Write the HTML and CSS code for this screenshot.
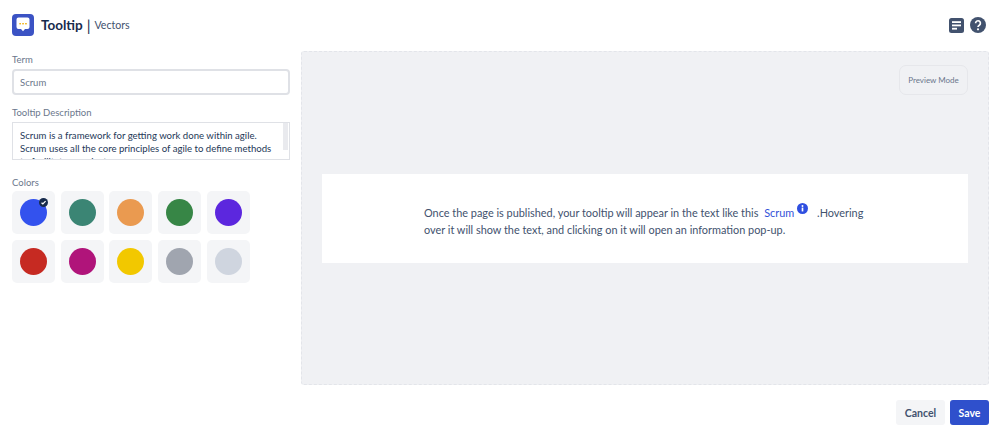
FILE: index.html
```html
<!DOCTYPE html>
<html lang="en">
<head>
    <meta charset="UTF-8">
    <meta name="viewport" content="width=device-width, initial-scale=1.0">
    <title>Tooltip | Vectors</title>
    <link rel="stylesheet" href="styles.css">
</head>
<body>
    <header class="top-bar">
        <div class="brand">
            <svg class="brand-icon" width="22" height="22" viewBox="0 0 22 22">
                <rect width="22" height="22" rx="4" fill="#3b53c4"/>
                <path d="M6.500 3.500h9a2 2 0 0 1 2 2v7.500a2 2 0 0 1-2 2h-2.500l-2 2.300-2-2.300h-2.500a2 2 0 0 1-2-2v-7.500a2 2 0 0 1 2-2z" fill="#fff"/>
                <rect x="7.300" y="9" width="1.700" height="1.400" fill="#f2b51d"/>
                <rect x="10.200" y="9" width="1.700" height="1.400" fill="#f2b51d"/>
                <rect x="13.100" y="9" width="1.700" height="1.400" fill="#f2b51d"/>
            </svg>
            <span class="brand-name">Tooltip</span>
            <span class="brand-sep">|</span>
            <span class="brand-sub">Vectors</span>
        </div>
        <div class="top-actions">
            <svg width="15" height="15" viewBox="0 0 15 15">
                <rect width="15" height="15" rx="2.500" fill="#42526e"/>
                <rect x="3" y="3.200" width="9" height="1.800" fill="#fff"/>
                <rect x="3" y="6.500" width="9" height="1.800" fill="#fff"/>
                <rect x="3" y="9.800" width="5" height="1.800" fill="#fff"/>
            </svg>
            <svg width="16" height="16" viewBox="0 0 16 16">
                <circle cx="8" cy="8" r="8" fill="#42526e"/>
                <path d="M5.600 6.200a2.400 2.400 0 1 1 3.700 2c-.9.6-1.300 1-1.300 1.800" fill="none" stroke="#fff" stroke-width="1.700"/>
                <circle cx="8" cy="12.300" r="1.100" fill="#fff"/>
            </svg>
        </div>
    </header>

    <main class="layout">
        <section class="form-col">
            <label class="field-label">Term</label>
            <div class="term-input">Scrum</div>

            <label class="field-label desc-label" for="desc">Tooltip Description</label>
            <textarea id="desc" class="desc-box" readonly>Scrum is a framework for getting work done within agile. Scrum uses all the core principles of agile to define methods to facilitate a project.</textarea>

            <label class="field-label colors-label">Colors</label>
            <div class="swatches">
                <div class="swatch">
                    <span class="dot dot-blue"></span>
                    <span class="check">
                        <svg width="9" height="9" viewBox="0 0 10 10"><path d="M2.800 5.200l1.500 1.300 3-3" fill="none" stroke="#fff" stroke-width="1.400"/></svg>
                    </span>
                </div>
                <div class="swatch"><span class="dot dot-teal"></span></div>
                <div class="swatch"><span class="dot dot-orange"></span></div>
                <div class="swatch"><span class="dot dot-green"></span></div>
                <div class="swatch"><span class="dot dot-purple"></span></div>
                <div class="swatch"><span class="dot dot-red"></span></div>
                <div class="swatch"><span class="dot dot-pink"></span></div>
                <div class="swatch"><span class="dot dot-yellow"></span></div>
                <div class="swatch"><span class="dot dot-grey"></span></div>
                <div class="swatch"><span class="dot dot-light"></span></div>
            </div>
        </section>

        <section class="preview">
            <div class="preview-top">
                <div class="preview-mode">Preview Mode</div>
            </div>
            <div class="preview-card">
                <p>Once the page is published, your tooltip will appear in the text like this <span class="term">Scrum<svg class="term-icon" width="11" height="11" viewBox="0 0 12 12"><circle cx="6" cy="6" r="6" fill="#2f4fe0"/><rect x="5.100" y="5" width="1.800" height="4.200" fill="#fff"/><circle cx="6" cy="3.300" r="1.050" fill="#fff"/></svg></span> .Hovering over it will show the text, and clicking on it will open an information pop-up.</p>
            </div>
        </section>
    </main>

    <footer class="actions">
        <button type="button" class="btn btn-cancel">Cancel</button>
        <button type="button" class="btn btn-save">Save</button>
    </footer>
</body>
</html>
```

FILE: styles.css
```css
html, body {
    height: 436px;
    overflow: hidden;
}
body {
    margin: 0;
    font-family: Lato, sans-serif;
    color: #253858;
    background: #fff;
}
.top-bar {
    display: flex;
    justify-content: space-between;
    align-items: center;
    height: 22px;
    padding: 14px 12px 15px 12px;
}
.brand {
    display: flex;
    align-items: center;
}
.brand-name {
    margin-left: 7px;
    font-size: 13.500px;
    font-weight: 700;
    color: #172b4d;
}
.brand-sep {
    margin: 0 4px;
    font-size: 15px;
    color: #172b4d;
}
.brand-sub {
    font-size: 10.600px;
    color: #42526e;
}
.top-actions {
    display: flex;
    align-items: center;
    gap: 6px;
}
.layout {
    display: flex;
    gap: 11px;
    padding: 0 9px 0 12px;
}
.form-col {
    width: 278px;
    flex-shrink: 0;
}
.field-label {
    display: block;
    font-size: 9.500px;
    line-height: 14px;
    color: #6b778c;
    margin-top: 2px;
    margin-bottom: 2px;
}
.term-input {
    box-sizing: border-box;
    height: 26px;
    padding: 1px 6px 0 6px;
    border: 2px solid #dfe1e6;
    border-radius: 4px;
    font-size: 9.500px;
    line-height: 22px;
    color: #6b778c;
}
.desc-label {
    margin-top: 11px;
}
.desc-box {
    display: block;
    box-sizing: border-box;
    width: 100%;
    height: 38px;
    margin: 0;
    padding: 6px 16px 0 7px;
    border: 1px solid #dfe1e6;
    border-radius: 0;
    outline: none;
    resize: none;
    overflow: hidden;
    /* scrollbars are hidden in the capture, thumb is painted instead */
    background: linear-gradient(#e9eaee, #e9eaee) no-repeat right 1px top 0 / 5px 27px;
    font-family: inherit;
    font-size: 9.600px;
    line-height: 13px;
    color: #253858;
}
.colors-label {
    margin-top: 16px;
    margin-bottom: 1px;
}
.swatches {
    display: grid;
    grid-template-columns: repeat(5, 43px);
    grid-auto-rows: 43px;
    gap: 6px 5.700px;
}
.swatch {
    position: relative;
    display: flex;
    align-items: center;
    justify-content: center;
    background: #f4f5f7;
    border-radius: 5px;
}
.dot {
    width: 27px;
    height: 27px;
    border-radius: 50%;
}
.dot-blue { background: #3352ee; }
.dot-teal { background: #3b8574; }
.dot-orange { background: #ea9a50; }
.dot-green { background: #378646; }
.dot-purple { background: #5c27de; }
.dot-red { background: #c62a22; }
.dot-pink { background: #b0147a; }
.dot-yellow { background: #f2c800; }
.dot-grey { background: #a0a5af; }
.dot-light { background: #cfd5df; }
.check {
    position: absolute;
    top: 7px;
    right: 7px;
    width: 9px;
    height: 9px;
    background: #172b4d;
    border-radius: 50%;
    display: flex;
}
.preview {
    flex: 1;
    box-sizing: border-box;
    height: 334px;
    background: #f0f1f4;
    border: 1px dashed #e3e5ea;
    border-radius: 3px;
    padding: 13px 20px 0 20px;
}
.preview-top {
    display: flex;
    justify-content: flex-end;
}
.preview-mode {
    width: 69px;
    height: 30px;
    box-sizing: border-box;
    border: 1px solid #e6e7eb;
    border-radius: 7px;
    font-size: 8px;
    line-height: 28px;
    text-align: center;
    color: #6b778c;
}
.preview-card {
    margin-top: 79px;
    height: 89px;
    box-sizing: border-box;
    background: #fff;
    padding: 29px 100px 0 102px;
}
.preview-card p {
    margin: 0;
    font-size: 10.900px;
    line-height: 17px;
    color: #42526e;
}
.term {
    margin-left: 3px;
    margin-right: 6px;
    color: #3352d8;
}
.term-icon {
    margin-left: 3px;
    vertical-align: 3px;
}
.actions {
    display: flex;
    justify-content: flex-end;
    gap: 5px;
    padding: 15px 9px 0 0;
}
.btn {
    height: 25px;
    border: none;
    border-radius: 3px;
    font-family: inherit;
    font-size: 10.500px;
    font-weight: 700;
}
.btn-cancel {
    width: 49px;
    background: #f4f5f7;
    color: #42526e;
}
.btn-save {
    width: 39px;
    background: #2f50cc;
    color: #fff;
}
```
